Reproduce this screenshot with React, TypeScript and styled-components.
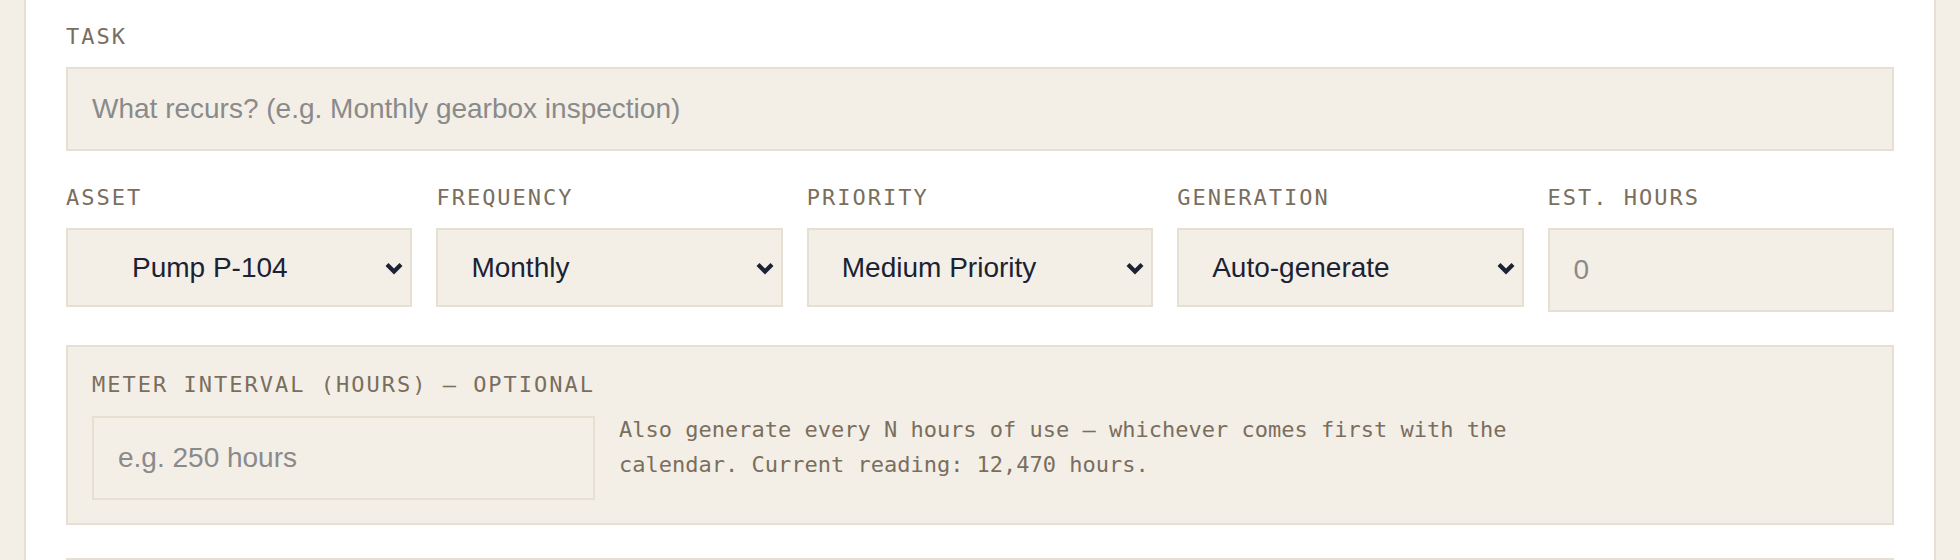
import React from 'react';
import styled, { createGlobalStyle } from 'styled-components';

const beige = '#f3efe7';
const line = '#e6e0d3';
const muted = '#7a6e5e';
const ink = '#1b2233';

const GlobalStyle = createGlobalStyle`
  html, body {
    margin: 0;
    height: 560px;
    overflow: hidden;
    background: ${beige};
  }
  body {
    font-family: "Liberation Sans", Arial, sans-serif;
  }
  *, *::before, *::after { box-sizing: border-box; }
`;

const Page = styled.div`
  padding: 0 24px;
`;

const Panel = styled.div`
  background: #fff;
  border-left: 2px solid ${line};
  border-right: 2px solid ${line};
  padding: 24px 40px 0;
  min-height: 560px;
  display: flex;
  flex-direction: column;
  gap: 33px;
`;

const Field = styled.div`
  display: flex;
  flex-direction: column;
  min-width: 0;
`;

const Label = styled.label`
  font-family: "DejaVu Sans Mono", monospace;
  font-size: 22px;
  line-height: 26px;
  letter-spacing: 2px;
  text-transform: uppercase;
  color: ${muted};
  margin-bottom: 17px;
`;

const TextInput = styled.input`
  width: 100%;
  height: 84px;
  padding: 0 24px;
  background: ${beige};
  border: 2px solid ${line};
  border-radius: 0;
  font-family: "Liberation Sans", Arial, sans-serif;
  font-size: 28px;
  color: ${ink};
  outline: none;

  &::placeholder {
    color: #8a8a8a;
  }
`;

const Row = styled.div`
  display: grid;
  grid-template-columns: repeat(5, 1fr);
  gap: 24px;
  align-items: start;
  padding-top: 1px;
`;

const SelectWrap = styled.div`
  position: relative;
`;

const Select = styled.select<{ $indent?: number }>`
  appearance: none;
  -webkit-appearance: none;
  width: 100%;
  height: 79px;
  padding: 0 40px 0 ${({ $indent }) => $indent ?? 33}px;
  background: ${beige};
  border: 2px solid ${line};
  border-radius: 0;
  font-family: "Liberation Sans", Arial, sans-serif;
  font-size: 28px;
  color: ${ink};
  outline: none;
`;

const Chevron = styled.svg`
  position: absolute;
  right: 8px;
  top: 50%;
  transform: translateY(-50%);
  pointer-events: none;
`;

const MeterBox = styled.div`
  background: ${beige};
  border: 2px solid ${line};
  padding: 25px 24px 23px;
  display: flex;
  flex-direction: column;
`;

const MeterLabel = styled(Label)`
  margin-bottom: 18px;
`;

const MeterRow = styled.div`
  display: flex;
  align-items: flex-start;
  gap: 24px;
`;

const MeterInput = styled(TextInput)`
  width: 503px;
  flex: 0 0 503px;
`;

const Help = styled.p`
  margin: -4px 0 0;
  max-width: 900px;
  font-family: "DejaVu Sans Mono", monospace;
  font-size: 22px;
  line-height: 35px;
  color: ${muted};
`;

const NextBox = styled.div`
  height: 120px;
  background: ${beige};
  border: 2px solid ${line};
`;

function Dropdown(props: { value: string; options: string[]; indent?: number }) {
  return (
    <SelectWrap>
      <Select defaultValue={props.value} $indent={props.indent}>
        {props.options.map((o) => (
          <option key={o}>{o}</option>
        ))}
      </Select>
      <Chevron width="20" height="14" viewBox="0 0 20 14">
        <path d="M3 3.5 L10 10.5 L17 3.5" fill="none" stroke={ink} strokeWidth="4.2" />
      </Chevron>
    </SelectWrap>
  );
}

export default function App() {
  return (
    <>
      <GlobalStyle />
      <Page>
        <Panel>
          <Field>
            <Label>Task</Label>
            <TextInput placeholder="What recurs? (e.g. Monthly gearbox inspection)" />
          </Field>

          <Row>
            <Field>
              <Label>Asset</Label>
              <Dropdown value="Pump P-104" options={['Pump P-104', 'Compressor C-2', 'Conveyor B-7']} indent={64} />
            </Field>
            <Field>
              <Label>Frequency</Label>
              <Dropdown value="Monthly" options={['Daily', 'Weekly', 'Monthly', 'Quarterly', 'Yearly']} />
            </Field>
            <Field>
              <Label>Priority</Label>
              <Dropdown value="Medium Priority" options={['Low Priority', 'Medium Priority', 'High Priority']} />
            </Field>
            <Field>
              <Label>Generation</Label>
              <Dropdown value="Auto-generate" options={['Auto-generate', 'Manual']} />
            </Field>
            <Field>
              <Label>Est. Hours</Label>
              <TextInput type="number" placeholder="0" />
            </Field>
          </Row>

          <MeterBox>
            <MeterLabel>Meter Interval (Hours) — Optional</MeterLabel>
            <MeterRow>
              <MeterInput placeholder="e.g. 250 hours" />
              <Help>
                Also generate every N hours of use — whichever comes first with the calendar. Current
                reading: 12,470 hours.
              </Help>
            </MeterRow>
          </MeterBox>

          <NextBox />
        </Panel>
      </Page>
    </>
  );
}
